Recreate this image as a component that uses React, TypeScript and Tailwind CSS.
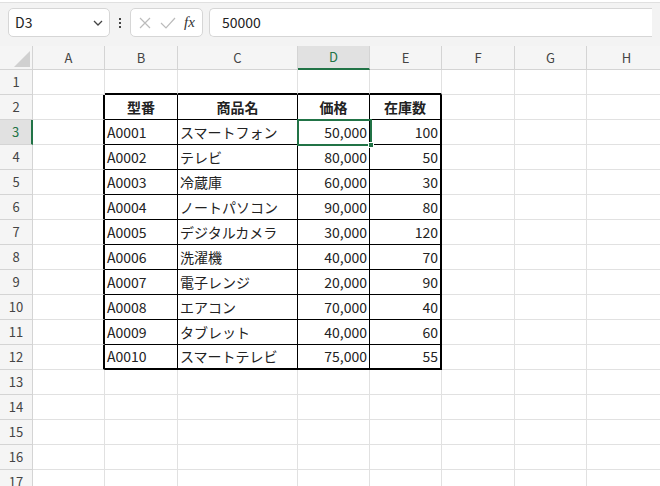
import React from "react";

const cols = [
  { k: "A", w: 72 },
  { k: "B", w: 73 },
  { k: "C", w: 120 },
  { k: "D", w: 72 },
  { k: "E", w: 72 },
  { k: "F", w: 73 },
  { k: "G", w: 72 },
  { k: "H", w: 80 },
];
const data: [string, string, string, string][] = [
  ["A0001", "スマートフォン", "50,000", "100"],
  ["A0002", "テレビ", "80,000", "50"],
  ["A0003", "冷蔵庫", "60,000", "30"],
  ["A0004", "ノートパソコン", "90,000", "80"],
  ["A0005", "デジタルカメラ", "30,000", "120"],
  ["A0006", "洗濯機", "40,000", "70"],
  ["A0007", "電子レンジ", "20,000", "90"],
  ["A0008", "エアコン", "70,000", "40"],
  ["A0009", "タブレット", "40,000", "60"],
  ["A0010", "スマートテレビ", "75,000", "55"],
];

export default function App() {
  const font = { fontFamily: '"Noto Sans CJK JP", "Liberation Sans", sans-serif' };
  const rows = Array.from({ length: 17 }, (_, i) => i + 1);
  return (
    <div className="w-[660px] h-[486px] overflow-hidden bg-white text-[#222]" style={font}>
      <div className="h-[3px] bg-white border-b border-[#e0e0e0]" />
      <div className="h-[43px] bg-[#f3f3f3] flex items-center px-[8px] gap-[6px] pb-[4px]">
        <div className="w-[102px] h-[29px] shrink-0 bg-white border border-[#d6d6d6] rounded-[5px] flex items-center justify-between px-[6px] text-[14px]">
          <span>D3</span>
          <svg width="10" height="6" viewBox="0 0 10 6"><path d="M1 1l4 4 4-4" stroke="#444" strokeWidth="1.3" fill="none" /></svg>
        </div>
        <div className="flex flex-col gap-[2px] w-[8px] items-center">
          <span className="w-[2px] h-[2px] bg-[#444]" /><span className="w-[2px] h-[2px] bg-[#444]" /><span className="w-[2px] h-[2px] bg-[#444]" />
        </div>
        <div className="w-[73px] h-[29px] shrink-0 bg-white border border-[#d6d6d6] rounded-[5px] flex items-center justify-around px-[3px]">
          <svg width="14" height="14" viewBox="0 0 14 14"><path d="M2 2l10 10M12 2L2 12" stroke="#bbb" strokeWidth="1.2" /></svg>
          <svg width="16" height="14" viewBox="0 0 16 14"><path d="M1 7l5 5L15 2" stroke="#bbb" strokeWidth="1.2" fill="none" /></svg>
          <span className="italic text-[15px] text-[#333]" style={{ fontFamily: '"Liberation Serif", serif' }}>fx</span>
        </div>
        <div className="flex-1 h-[29px] bg-white border border-[#d6d6d6] rounded-l-[5px] border-r-0 flex items-center px-[12px] text-[14px]">50000</div>
      </div>
      <div className="relative">
        <div className="flex h-[24px] bg-[#f5f5f5] text-[13px] text-[#444]">
          <div className="w-[33px] shrink-0 border-r border-b border-[#d4d4d4] relative">
            <svg className="absolute right-[2px] bottom-[2px]" width="16" height="16" viewBox="0 0 16 16"><path d="M16 0L16 16L0 16Z" fill="#d0d0d0" /></svg>
          </div>
          {cols.map((c) => (
            <div key={c.k} style={{ width: c.w }} className={`shrink-0 flex items-center justify-center border-r border-[#d4d4d4] ${c.k === "D" ? "bg-[#e1e1e1] border-b-2 border-b-[#217346] text-[#217346]" : "border-b"}`}>{c.k}</div>
          ))}
        </div>
        {rows.map((r) => (
          <div key={r} className="flex h-[25px] text-[14px]">
            <div className={`w-[33px] shrink-0 flex items-center justify-center text-[13px] border-b border-[#d4d4d4] ${r === 3 ? "bg-[#e1e1e1] text-[#217346] border-r-2 border-r-[#217346]" : "bg-[#f5f5f5] text-[#444] border-r"}`}>{r}</div>
            {cols.map((c, ci) => {
              const inT = r >= 2 && r <= 12 && ci >= 1 && ci <= 4;
              const rightBlack = r >= 2 && r <= 12 && ci >= 0 && ci <= 4;
              const bottomBlack = r >= 1 && r <= 12 && ci >= 1 && ci <= 4;
              const rw = ci === 0 || ci === 4 ? 2 : 1;
              const bw = r === 1 || r === 12 ? 2 : 1;
              let txt = "";
              let cls = "";
              if (inT) {
                if (r === 2) {
                  txt = ["型番", "商品名", "価格", "在庫数"][ci - 1];
                  cls = "justify-center font-bold";
                } else {
                  txt = data[r - 3][ci - 1];
                  cls = ci >= 3 ? "justify-end pr-[2px]" : "justify-start pl-[2px]";
                }
              }
              return (
                <div
                  key={c.k}
                  style={{
                    width: c.w,
                    borderRightWidth: rightBlack ? rw : 1,
                    borderRightColor: rightBlack ? "#000" : "#e1e1e1",
                    borderBottomWidth: bottomBlack ? bw : 1,
                    borderBottomColor: bottomBlack ? "#000" : "#e1e1e1",
                  }}
                  className={`shrink-0 box-border border-solid flex items-center overflow-hidden whitespace-nowrap ${cls}`}
                >
                  {txt}
                </div>
              );
            })}
          </div>
        ))}
        <div className="absolute left-[297px] top-[73px] w-[75px] h-[27px] border-2 border-[#217346]">
          <div className="absolute -right-[4px] -bottom-[4px] w-[6px] h-[6px] bg-[#217346] border border-white" />
        </div>
      </div>
    </div>
  );
}
